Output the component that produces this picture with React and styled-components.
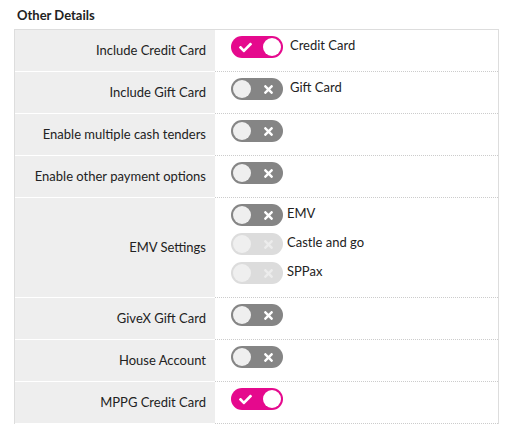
import React from 'react';
import styled, { createGlobalStyle } from 'styled-components';
import { FaCheck, FaTimes } from 'react-icons/fa';

const GlobalStyle = createGlobalStyle`
  body {
    margin: 0;
    background: #fff;
    font-family: Lato, "Open Sans", sans-serif;
    color: #222;
  }
`;

const Page = styled.div`
  padding: 7px 10px 0 14px;
`;

const Heading = styled.h3`
  margin: 0 0 6px;
  padding-left: 3px;
  font-size: 13px;
  line-height: 16px;
  font-weight: 700;
  color: #222;
`;

const Table = styled.div`
  display: grid;
  grid-template-columns: 200px 1fr;
  border: 1px solid #ddd;
  border-bottom: none;
  width: 483px;
`;

const Label = styled.div`
  display: flex;
  align-items: center;
  justify-content: flex-end;
  padding: 0 9px 1px 0;
  background: #eeeeee;
  border-bottom: 1px solid #fff;
  font-size: 13px;
  color: #222;
`;

const Value = styled.div`
  padding: 6px 16px;
  border-bottom: 1px dotted #ccc;
`;

const Option = styled.div`
  display: flex;
  align-items: flex-start;
  height: 22px;
  margin-bottom: 7px;
`;

const Track = styled.span`
  position: relative;
  flex: none;
  width: 52px;
  height: 22px;
  border-radius: 11px;
  background: ${(p) => (p.$on ? '#e5098d' : p.$disabled ? '#dcdcdc' : '#858585')};
  color: ${(p) => (p.$disabled ? '#ececec' : '#fff')};
  display: flex;
  align-items: center;
  justify-content: ${(p) => (p.$on ? 'flex-start' : 'flex-end')};
  padding: 0 8px;
  box-sizing: border-box;
  font-size: 13px;
`;

const Knob = styled.span`
  position: absolute;
  top: 2px;
  ${(p) => (p.$on ? 'right: 2px;' : 'left: 2px;')}
  width: 18px;
  height: 18px;
  border-radius: 50%;
  background: ${(p) => (p.$on ? '#fff' : '#efefef')};
`;

const OptionText = styled.span`
  margin-left: ${(p) => (p.$tight ? '4px' : '7px')};
  font-size: 13px;
  line-height: 19px;
  color: #222;
`;

const Toggle = ({ on, disabled }) => (
  <Track $on={on} $disabled={disabled}>
    {on ? <FaCheck /> : <FaTimes />}
    <Knob $on={on} />
  </Track>
);

const rows = [
  { label: 'Include Credit Card', options: [{ on: true, text: 'Credit Card' }] },
  { label: 'Include Gift Card', options: [{ on: false, text: 'Gift Card' }] },
  { label: 'Enable multiple cash tenders', options: [{ on: false }] },
  { label: 'Enable other payment options', options: [{ on: false }] },
  {
    label: 'EMV Settings',
    tight: true,
    options: [
      { on: false, text: 'EMV' },
      { on: false, disabled: true, text: 'Castle and go' },
      { on: false, disabled: true, text: 'SPPax' },
    ],
  },
  { label: 'GiveX Gift Card', options: [{ on: false }] },
  { label: 'House Account', options: [{ on: false }] },
  { label: 'MPPG Credit Card', options: [{ on: true }] },
];

const App = () => (
  <>
    <GlobalStyle />
    <Page>
      <Heading>Other Details</Heading>
      <Table>
        {rows.map((row) => (
          <React.Fragment key={row.label}>
            <Label>{row.label}</Label>
            <Value>
              {row.options.map((o, i) => (
                <Option key={i}>
                  <Toggle on={o.on} disabled={o.disabled} />
                  {o.text && <OptionText $tight={row.tight}>{o.text}</OptionText>}
                </Option>
              ))}
            </Value>
          </React.Fragment>
        ))}
      </Table>
    </Page>
  </>
);

export default App;
